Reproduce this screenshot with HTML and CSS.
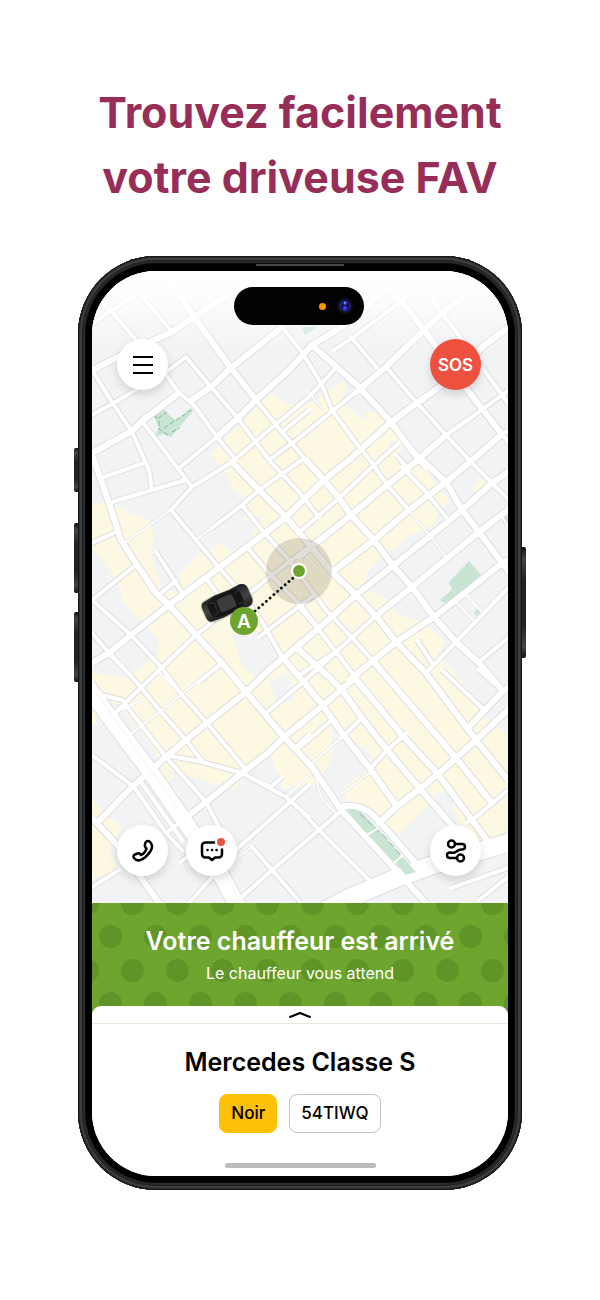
FILE: index.html
```html
<!DOCTYPE html>
<html lang="fr">

<head>
    <meta charset="UTF-8">
    <meta name="viewport" content="width=device-width, initial-scale=1.0">
    <title>Driveuse FAV</title>

    <link rel="stylesheet" href="styles.css">
</head>

<body>
    <h1 class="headline">Trouvez facilement<br>votre driveuse FAV</h1>

    <div class="phone">
        <span class="sideBtn action"></span>
        <span class="sideBtn volumeUp"></span>
        <span class="sideBtn volumeDown"></span>
        <span class="sideBtn power"></span>
        <span class="speaker"></span>

        <main class="screen">
            <section class="mapHolder">
                <svg class="map" viewBox="93 271 416 632" preserveAspectRatio="xMidYMid slice" role="img" aria-label="Carte">
                    <defs>
                        <path id="thin" d="M127 542L172 510M197 540L213 528M133 733L163 710L213 670M313 763L343 737M343 793L372 772M317 773Q319 796 327 803L337 813M253 847L240 856M143 700L117 712M410 510L430 535L447 557M102 478L99 470M287 797L310 775M158 670L183 695M350 515L377 542M243 773L270 785M458 603L475 621M466 594L482 611M480 532L502 515M502 515L509 526M310 392L324 410M302 550L315 565"/>
                        <path id="streets" d="M93 324L113 310L142 292L158 281M142 295L173 332M93 370L113 402L133 432L150 470L153 490M93 415L113 404L167 372L187 357L212 387L238 417M93 294L113 312L137 340L167 375L180 393L195 405L218 437L237 460M93 453L99 470M143 421L180 470L193 487M102 478L145 463M110 503L153 490L187 480M172 510L193 487L233 462L270 430L310 397L335 370M180 468L218 437M172 510L197 540L222 570L240 590L262 620L283 657M213 528L243 505L260 490L303 460M238 417L270 460L300 492L320 517M243 505L263 530L290 560L327 610M248 547L270 573L303 607L320 629M93 600L137 565M93 543L117 532M157 552L183 592M162 593L177 581M207 578L223 600M93 600L132 635L162 667L183 695M93 633L110 653L133 677L163 713L187 740L203 761M157 673L197 635L257 588L270 577L310 547L352 515M260 637L315 595M200 682L223 663M257 682L283 660L300 643L320 628
                            M283 327L303 352L323 385L333 410L357 443L373 463M352 337L378 368M335 350L353 338L400 303L423 283M403 302L388 287M427 290L443 313L467 345L503 395L510 405M477 457L502 435L510 430M502 433L510 443M447 435L473 417L503 395L510 390M387 367L418 403L447 435L473 463L493 483L510 500M283 432L307 460L325 480M270 460L300 438L357 392M257 400L283 432L310 410M303 530L340 498L373 467L400 443M373 463L388 485L410 510M403 467L427 492L447 517M397 455L410 470M418 640L433 663M427 673L457 642L483 615L509 588M480 662L509 638M300 675L337 652L378 615M327 610L355 640L375 662L390 680M300 607L320 630L337 652L357 678
                            M93 755L135 787L167 833L183 850M142 782L183 840M167 833L193 813L207 802M167 757L207 802L220 827L228 850M103 695L123 700L167 757M167 755L203 762L243 773L287 797L310 817M117 712L153 677L197 635M183 695L208 723L247 770M272 787L283 777M267 713L303 683L337 652M297 747L310 735M93 887L120 870M182 862L194 852M190 903L240 847L290 803L310 785M243 897L273 870L320 830L347 807M253 847L273 870L302 903M300 727L322 707L357 677L375 660M300 748L333 720M343 737L363 718M372 768L388 750L408 733M467 823L477 817L509 790M443 670L483 708M480 670L503 690M300 808L320 830L380 890M452 888L509 868M480 900L509 877"/>
                        <path id="avenues" d="M93 370L133 350L173 332L195 317L233 292M93 453L133 431L143 421L180 393M95 460L110 503L122 540L138 565L157 593L170 605L197 635L223 663L247 692L285 737L313 767L343 811L367 837L405 879L427 903M173 283L195 317L232 368L257 400M193 400L212 387L232 368L283 327M218 437L237 420L257 400L290 370L313 345L335 332L363 312L387 288M93 663L110 653L132 635L170 605L213 573L248 547L287 517L325 480M313 345L360 387L392 422L410 447L427 467M387 288L403 302L425 330L467 388L502 433M357 392L387 367L425 330L443 313L480 285M325 480L350 460L392 422L418 403L467 368L483 347L510 327M233 462L260 490L287 517L333 572L357 595L378 617L397 642L427 673L477 740L509 780M300 557L352 515L388 485L407 470L447 435M333 572L375 540L410 510L447 482L470 463L502 435M270 670L320 628L357 595L395 565L430 537L463 510L493 483L509 472M378 615L413 587L480 532L509 510M350 680L375 660L397 642L435 617L457 600L503 563L510 560M307 460L325 480L340 498L352 515L375 540L395 567L413 587L435 617L457 642L480 663L503 690M423 460L447 482L463 510L480 532L503 563L510 572M98 823L133 787L160 763L187 740L208 723L247 692L270 670M95 820L120 847L160 903M193 813L207 802L243 773L270 752L285 737L322 707L357 677M283 657L303 680L322 703L343 733L372 770L397 805M300 650L330 677L343 690L363 718L388 750L422 790L457 830M355 677L403 735L438 773L473 820L495 850M375 662L457 758L493 803M380 823L397 807L422 788L440 773L457 758L477 740L509 710M470 727L503 692L510 687M345 806Q362 804 374 815L387 829L421 868"/>
                        <path id="highway" d="M88 686L120 730L150 770L187 823L223 877L240 908"/>
                        <path id="ringroad" d="M320 914L350 898L400 877L440 863L512 842"/>
                        <linearGradient id="fade" x1="0" y1="0" x2="0" y2="1">
                            <stop offset="0" stop-color="#fff"/>
                            <stop offset="0.25" stop-color="#fff" stop-opacity="0.9"/>
                            <stop offset="1" stop-color="#fff" stop-opacity="0"/>
                        </linearGradient>
                        <linearGradient id="carPaint" x1="0" y1="0" x2="0" y2="1">
                            <stop offset="0" stop-color="#1c1d1c"/>
                            <stop offset="0.5" stop-color="#444543"/>
                            <stop offset="1" stop-color="#1c1d1c"/>
                        </linearGradient>
                    </defs>

                    <rect x="93" y="271" width="416" height="632" fill="#f1f3f4"/>

                    <!-- busy areas -->
                    <g fill="#fdf8e1">
                        <path d="M212 455L225 440L240 425L272 393L290 405L312 402L345 380L348 390L340 402L362 418L370 410L382 415L396 430L405 447L395 458L408 468L425 458L432 478L450 500L440 512L435 525L412 535L385 555L366 575L370 590L390 600L400 615L425 622L445 640L440 655L470 690L490 720L509 735L509 825L495 850L460 822L445 790L425 810L400 835L380 820L350 802L340 790L372 768L355 745L343 740L333 725L333 760L318 783L305 790L295 785L285 790L270 752L250 770L235 790L165 768L150 742L120 705L93 693L93 672L130 678L145 665L158 655L160 640L125 603L120 585L105 562L93 550L93 502L115 505L135 515L150 520L155 535L152 555L163 590L183 592L180 575L200 555L222 543L232 552L240 555L265 515L243 522L243 525L250 500L235 490L225 470Z"/>
                        <path d="M472 488L480 478L487 483L480 491ZM93 795L103 810L123 828L110 850L120 868L93 880ZM93 680L102 700L97 725L93 725ZM164 765L176 777L168 782L160 772Z"/>
                    </g>
                    <g fill="#f1f3f4">
                        <path d="M232 635L260 632L285 655L262 680L245 668ZM352 405L365 405L368 420L358 415ZM385 458L392 440L402 446ZM438 793L458 795L452 815L430 812ZM363 745L375 760L366 765L358 750ZM270 682L290 672L295 700L280 705Z"/>
                    </g>
                    <!-- parks -->
                    <g fill="#c8e4d2">
                        <path d="M441 600L453 590L450 582L470 561L482 575L466 589L447 604ZM475 612L481 607L482 612L477 616ZM503 517L509 512L509 526L504 523ZM152 411L163 407L170 415L177 420L181 426L172 437L164 434L156 437L160 427ZM177 421L192 408L194 411L181 426ZM303 327L318 327L306 335Z"/>
                    </g>
                    <path d="M155 414L158 419L168 412M160 421L160 429L169 435M165 428L192 410M173 432L181 428" fill="none" stroke="#82bb94" stroke-dasharray="5 2"/>

                    <g class="casing">
                        <use href="#thin" stroke-width="3"/>
                        <use href="#streets" stroke-width="6"/>
                        <use href="#avenues" stroke-width="8"/>
                        <use href="#highway" stroke-width="18"/>
                        <use href="#ringroad" stroke-width="20"/>
                    </g>
                    <g class="road">
                        <use href="#thin" stroke-width="2"/>
                        <use href="#streets" stroke-width="4"/>
                        <use href="#avenues" stroke-width="6"/>
                        <use href="#highway" stroke-width="16"/>
                        <use href="#ringroad" stroke-width="18"/>
                    </g>
                    <path d="M97 693L180 810M222 865L239 897M460 870L509 853" fill="none" stroke="#f1f2f3"/>

                    <!-- promenade -->
                    <path d="M348 810Q358 808 364 814L385 836L417 872L407 875L390 856L366 832Z" fill="#c8e4d2"/>
                    <path d="M361 814L385 836L400 853L401 860" fill="none" stroke="#9cb5a5" stroke-dasharray="7 3"/>
                    <path d="M368 835L379 828M395 863L404 855" fill="none" stroke="#fff" stroke-width="2"/>

                    <rect x="93" y="271" width="416" height="80" fill="url(#fade)"/>

                    <!-- pickup point -->
                    <circle cx="300" cy="571" r="33" fill="#8b8468" fill-opacity="0.27"/>
                    <g transform="translate(228 603) rotate(-24)">
                        <rect x="-26" y="-12" width="52" height="25" rx="8" fill="#555" fill-opacity="0.25"/>
                        <path d="M-22 -10Q-25 -9 -25 -4V5Q-25 10 -21 11L-9 12L8 11L19 12Q25 11 25 5V-6Q25 -11 19 -12L7 -11L-9 -12Z" fill="url(#carPaint)"/>
                        <path d="M-18 -8L-9 -10H10L15 -8Q18 0 15 8L10 10H-9L-18 8Q-21 0 -18 -8Z" fill="#151615"/>
                        <rect x="-9" y="-7" width="17" height="14" rx="3" fill="#3c3d3a"/>
                        <path d="M-17 -7L-11 -5Q-13 0 -11 5L-17 7M11 -5L15 -7M11 5L15 7" fill="none" stroke="#303130"/>
                    </g>
                    <path d="M256 611L294 578" stroke="#111" stroke-width="3" stroke-linecap="round" stroke-dasharray="0 5"/>
                    <circle cx="300" cy="571" r="8" fill="#fff"/>
                    <circle cx="300" cy="571" r="6" fill="#6ea52f"/>
                    <circle cx="245" cy="621" r="14" fill="#6ea52f"/>
                    <text class="pinText" x="245" y="628" text-anchor="middle">A</text>
                </svg>

                <div class="island">
                    <span class="micDot"></span>
                    <svg width="16" height="16" viewBox="0 0 16 16" aria-hidden="true">
                        <circle cx="8" cy="8" r="8" fill="#10101c"/>
                        <circle cx="8" cy="8" r="5" fill="#11115a" stroke="#2b2bb4"/>
                        <circle cx="8" cy="5" r="1.5" fill="#6d7dff"/>
                        <circle cx="8" cy="10" r="2" fill="#4145e0"/>
                    </svg>
                </div>

                <div class="mapActions">
                    <button class="roundBtn" aria-label="Menu">
                        <svg width="20" height="18" viewBox="0 0 20 18"><path d="M0 1H20M0 9H20M0 17H20"/></svg>
                    </button>
                    <button class="roundBtn sos">SOS</button>
                </div>

                <div class="mapActions bottom">
                    <button class="roundBtn" aria-label="Appeler">
                        <svg class="bold" width="24" height="24" viewBox="0 0 48 48"><path d="M29 7C32 3 36 3 39 7C43 12 43 18 39 24C34 32 27 39 19 42C13 44 9 42 6 38C4 35 5 32 8 31L13 29C16 28 18 29 20 32C24 31 30 25 31 19C28 17 27 15 28 11Z"/></svg>
                    </button>
                    <button class="roundBtn chat" aria-label="Messages">
                        <svg class="bold" width="24" height="22" viewBox="0 0 48 44"><path d="M28 5H12Q4 5 4 12V28Q4 35 12 35H18L24 40L30 35H36Q44 35 44 28V19"/><path d="M15 20H15.200M24 20H24.200M33 20H33.200"/></svg>
                        <span class="unread"></span>
                    </button>
                    <button class="roundBtn last" aria-label="Itinéraire">
                        <svg class="bold" width="22" height="24" viewBox="0 0 44 48"><circle cx="13" cy="10" r="7"/><circle cx="31" cy="38" r="7"/><path d="M20 10H34Q40 10 40 16Q40 21 33 21Q27 21 23 25Q18 29 11 27Q4 27 4 32Q4 38 10 38H24"/></svg>
                    </button>
                </div>
            </section>

            <section class="banner">
                <h2>Votre chauffeur est arrivé</h2>
                <p>Le chauffeur vous attend</p>
            </section>

            <section class="sheet">
                <button class="handle" aria-label="Ouvrir les détails">
                    <svg width="24" height="8" viewBox="0 0 24 8"><path d="M2 6L12 2L22 6"/></svg>
                </button>
                <h2>Mercedes Classe S</h2>
                <div class="tags">
                    <span class="tag color">Noir</span>
                    <span class="tag">54TIWQ</span>
                </div>
                <div class="homeBar"></div>
            </section>
        </main>
    </div>
</body>

</html>
```
FILE: styles.css
```css
* {
    box-sizing: border-box;
}

body {
    margin: 0;
    padding: 80px 0 110px;
    background-color: #fff;
    color: #000;
    font-family: 'Inter', 'Liberation Sans', sans-serif;
}

h1,
h2,
p {
    margin: 0;
}

.headline {
    text-align: center;
    color: #972e57;
    font-size: 43px;
    line-height: 65px;
    font-weight: 700;
}

.phone {
    position: relative;
    width: 74%;
    max-width: 520px;
    margin: 46px auto 0;
    padding: 15px 14px 14px;
    border-radius: 78px;
    background-color: #000;
    box-shadow: inset 0 0 0 1px #161616, inset 0 0 0 2px #303030, inset 0 0 0 4px #3d3d3d, inset 0 0 0 5px #202020, inset 0 0 0 7px #292929, inset 0 0 0 8px #0b0b0b;
}

.sideBtn {
    position: absolute;
    left: -4px;
    width: 4px;
    background: linear-gradient(#111, #444 10%, #222 30%, #222 70%, #444 90%, #111);
    border-radius: 2px 0 0 2px;
}

.action {
    top: 192px;
    height: 44px;
}

.volumeUp {
    top: 267px;
    height: 70px;
}

.volumeDown {
    top: 356px;
    height: 70px;
}

.power {
    top: 291px;
    right: -4px;
    left: auto;
    height: 111px;
    border-radius: 0 2px 2px 0;
}

.speaker {
    position: absolute;
    top: 8px;
    left: 40%;
    width: 20%;
    height: 2px;
    background-color: #484848;
}

.screen {
    display: block;
    overflow: hidden;
    border-radius: 64px;
    background-color: #fff;
}

.mapHolder {
    position: relative;
    display: flex;
    flex-direction: column;
    aspect-ratio: 416 / 632;
    padding: 16px 27px 27px 25px;
}

.map {
    position: absolute;
    top: 0;
    left: 0;
    width: 100%;
    height: 100%;
}

.casing,
.road {
    fill: none;
    stroke: #dddee2;
    stroke-linejoin: round;
}

.road {
    stroke: #fff;
    stroke-linecap: round;
}

.pinText {
    fill: #fff;
    font-size: 19px;
    font-weight: 600;
}

.island {
    position: relative;
    display: flex;
    align-items: center;
    justify-content: flex-end;
    gap: 11px;
    width: 130px;
    height: 38px;
    margin: 0 auto;
    padding-right: 11px;
    border-radius: 19px;
    background-color: #020202;
}

.micDot {
    width: 7px;
    height: 7px;
    border-radius: 50%;
    background-color: #ff9500;
}

.mapActions {
    position: relative;
    display: flex;
    justify-content: space-between;
    margin-top: 14px;
}

.bottom {
    justify-content: flex-start;
    gap: 18px;
    margin-top: auto;
}

.last {
    margin-left: auto;
}

.roundBtn {
    position: relative;
    display: flex;
    align-items: center;
    justify-content: center;
    width: 51px;
    height: 51px;
    padding: 0;
    border: none;
    border-radius: 50%;
    background-color: #fff;
    box-shadow: 0 4px 10px rgba(0, 0, 0, 0.14);
    cursor: pointer;
}

.roundBtn svg,
.handle svg {
    fill: none;
    stroke: #000;
    stroke-width: 2;
    stroke-linecap: round;
    stroke-linejoin: round;
}

.roundBtn .bold {
    stroke-width: 5;
}

.sos {
    background-color: #ef5141;
    color: #fff;
    font-family: inherit;
    font-size: 17px;
    font-weight: 600;
}

.unread {
    position: absolute;
    top: 13px;
    right: 12px;
    width: 8px;
    height: 8px;
    border-radius: 50%;
    background-color: #ef5141;
}

.banner {
    padding: 20px 16px 28px;
    background-color: #6ea52f;
    background-image: radial-gradient(circle, #5f9427 11px, transparent 12px), radial-gradient(circle, #5f9427 11px, transparent 12px);
    background-size: 45px 67px;
    background-position: 18px 34px, -4px 0;
    color: #fff;
    text-align: center;
}

.banner h2 {
    font-size: 25px;
    line-height: 36px;
    font-weight: 600;
}

.banner p {
    font-size: 16px;
    line-height: 28px;
}

.sheet {
    margin-top: -9px;
    padding-bottom: 8px;
    border-radius: 9px 9px 0 0;
    background-color: #fff;
    text-align: center;
}

.handle {
    display: flex;
    justify-content: center;
    width: 100%;
    height: 18px;
    padding: 5px 0 0;
    border: none;
    border-bottom: 1px solid #e6e8d8;
    background: none;
    cursor: pointer;
}

.sheet h2 {
    margin-top: 20px;
    font-size: 25px;
    line-height: 36px;
    font-weight: 600;
}

.tags {
    display: flex;
    justify-content: center;
    gap: 12px;
    margin-top: 14px;
}

.tag {
    padding: 0 11px;
    border: 1px solid #c4c4c4;
    border-radius: 8px;
    font-size: 17px;
    line-height: 37px;
    font-weight: 500;
}

.color {
    border-color: #ffc107;
    background-color: #ffc107;
}

.homeBar {
    width: 151px;
    height: 5px;
    margin: 30px auto 0;
    border-radius: 3px;
    background-color: #bcbcbc;
}
```
